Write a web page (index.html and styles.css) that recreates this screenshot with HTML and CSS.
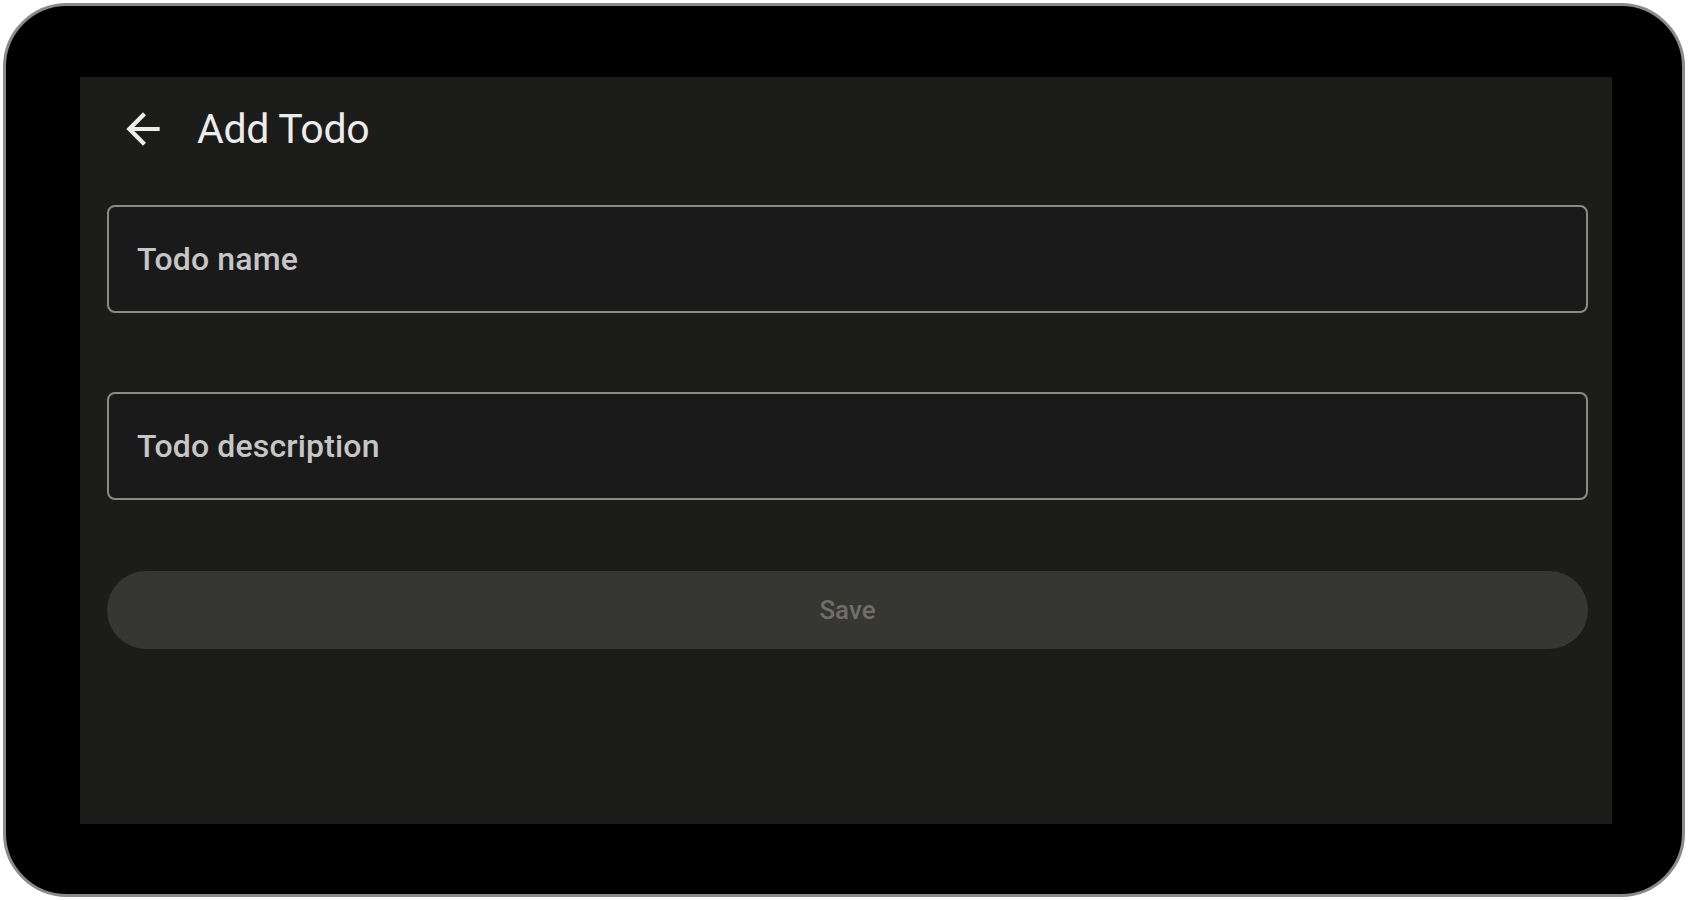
FILE: index.html
```html
<!DOCTYPE html>
<html lang="en">
<head>
<meta charset="utf-8">
<title>Add Todo</title>
<link rel="stylesheet" href="styles.css">
</head>
<body>
<div class="stage">
  <div class="device">
    <div class="screen">
      <header class="topbar">
        <button class="back" aria-label="Back">
          <svg viewBox="0 0 24 24" width="50" height="50"><path fill="currentColor" d="M20 11H7.83l5.59-5.59L12 4l-8 8 8 8 1.41-1.41L7.83 13H20v-2z"/></svg>
        </button>
        <h1 class="title">Add Todo</h1>
      </header>
      <div class="form">
        <div class="field"><span class="placeholder">Todo name</span></div>
        <div class="field"><span class="placeholder">Todo description</span></div>
        <button class="save">Save</button>
      </div>
    </div>
  </div>
</div>
</body>
</html>
```

FILE: styles.css
```css
* { box-sizing: border-box; }
html, body { margin: 0; padding: 0; background: #ffffff; }
body { font-family: Roboto, "Noto Sans", sans-serif; }

.stage {
  width: 1688px;
  height: 900px;
  padding: 3px;
}

.device {
  width: 1682px;
  height: 894px;
  background: #000000;
  border: 3px solid #8a8a8a;
  border-radius: 64px;
  padding: 71px 70px 70px 74px;
}

.screen {
  width: 1532px;
  height: 747px;
  background: #1c1c1a;
  padding: 27px 24px 0 27px;
  display: flex;
  flex-direction: column;
}

.topbar {
  display: flex;
  align-items: center;
  height: 50px;
  padding-left: 11px;
}

.back {
  width: 50px;
  height: 50px;
  padding: 0;
  border: 0;
  background: transparent;
  color: #ececec;
  display: flex;
}

.title {
  margin: 0 0 0 29px;
  font-size: 41px;
  font-weight: 400;
  color: #ececec;
  letter-spacing: -0.3px;
  line-height: 50px;
}

.form {
  margin-top: 51px;
  display: flex;
  flex-direction: column;
}

.field {
  height: 108px;
  border: 2px solid #8a8a8a;
  border-radius: 8px;
  background: #1a1a1a;
  display: flex;
  align-items: center;
  padding-left: 28px;
}

.field + .field { margin-top: 79px; }

.placeholder {
  font-size: 32px;
  font-weight: 500;
  color: #c6c6c6;
  letter-spacing: 0.15px;
}

.save {
  margin-top: 71px;
  height: 78px;
  border: 0;
  border-radius: 39px;
  background: #363632;
  color: #6e6e6a;
  font-family: Roboto, "Noto Sans", sans-serif;
  font-size: 26px;
  font-weight: 500;
}
```
